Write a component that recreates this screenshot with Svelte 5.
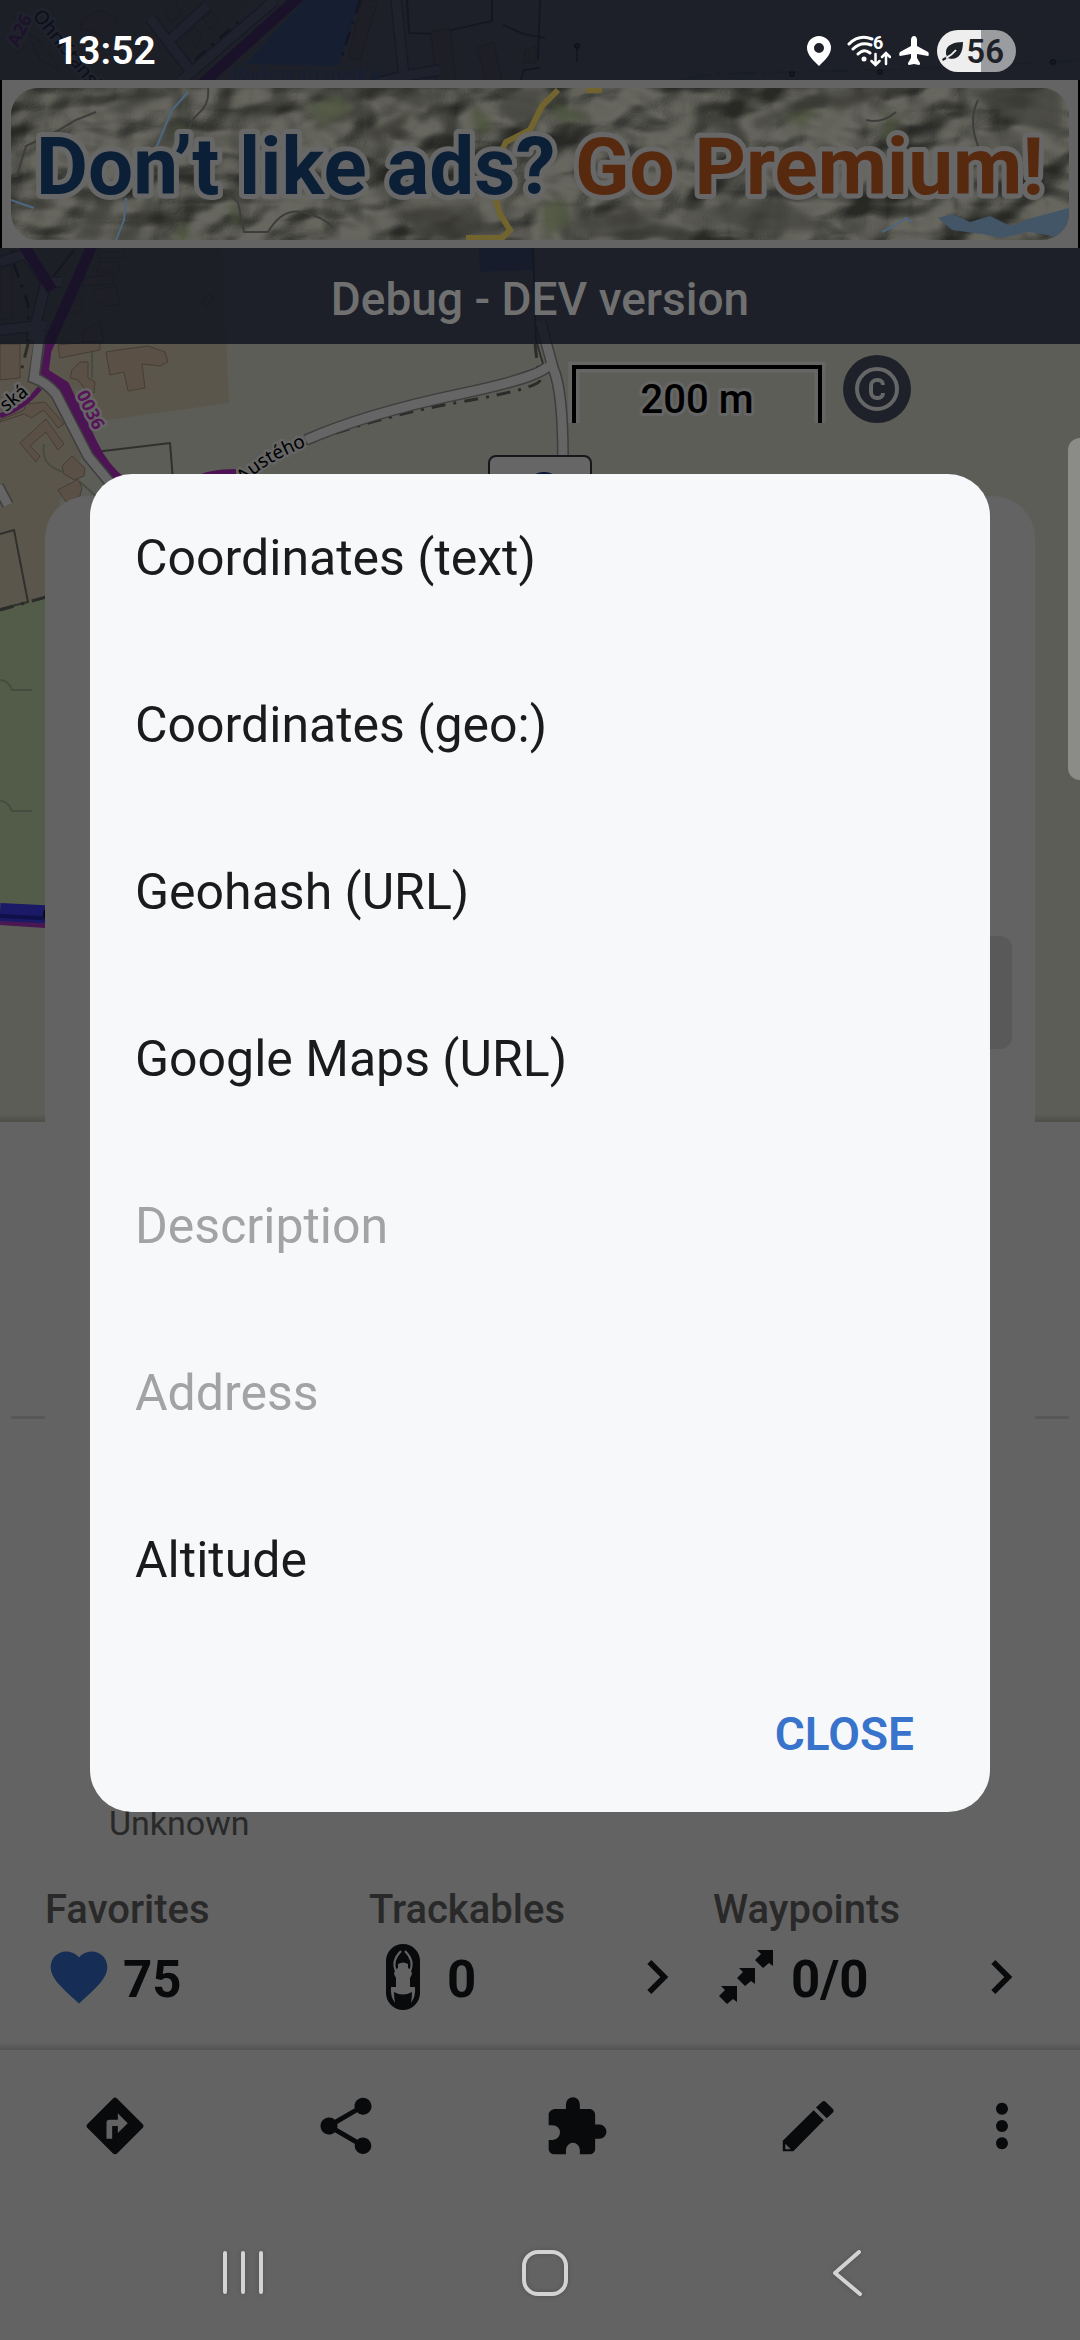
<script>
  // Copy menu shown above the point detail screen.
  const copyItems = [
    { label: 'Coordinates (text)', enabled: true },
    { label: 'Coordinates (geo:)', enabled: true },
    { label: 'Geohash (URL)', enabled: true },
    { label: 'Google Maps (URL)', enabled: true },
    { label: 'Description', enabled: false },
    { label: 'Address', enabled: false },
    { label: 'Altitude', enabled: true },
  ];

  const stats = [
    { id: 'favorites', label: 'Favorites', value: '75', link: false },
    { id: 'trackables', label: 'Trackables', value: '0', link: true },
    { id: 'waypoints', label: 'Waypoints', value: '0/0', link: true },
  ];

  const actions = [
    { label: 'Navigate', path: 'M21.710 11.290l-9-9a.996.996 0 0 0-1.410 0l-9 9a.996.996 0 0 0 0 1.410l9 9c.39.39 1.020.39 1.410 0l9-9a.996.996 0 0 0 0-1.410zM13 14.500V12h-2v4.500H9v-5.700c0-.6.4-1 1-1h3V7.500l3.500 3.500z' },
    { label: 'Share', path: 'M18 16.080c-.76 0-1.440.3-1.960.77L8.910 12.700c.05-.23.09-.46.09-.7s-.04-.47-.09-.7l7.050-4.110c.54.5 1.250.81 2.040.81 1.660 0 3-1.340 3-3s-1.340-3-3-3-3 1.340-3 3c0 .24.04.47.09.7L8.040 9.810C7.500 9.310 6.790 9 6 9c-1.660 0-3 1.340-3 3s1.340 3 3 3c.79 0 1.500-.31 2.040-.81l7.120 4.160c-.05.21-.08.43-.08.65 0 1.610 1.310 2.920 2.920 2.920s2.920-1.310 2.920-2.920-1.310-2.920-2.920-2.920z' },
    { label: 'Add-ons', path: 'M19.900 11.500H18.400V8c0-1.100-.9-2-2-2H13V4.300a2.400 2.400 0 0 0-4.900 0V6H4.500c-1.400 0-2.500.9-2.500 2v3.700h1.400a2.600 2.600 0 0 1 0 5.200H2V20c0 1.100.9 2 2.200 2h3.900v-1.600a2.450 2.450 0 0 1 4.900 0V22h3.400c1.100 0 2-.9 2-2v-3.500h1.500a2.500 2.500 0 0 0 0-5z' },
    { label: 'Edit', path: 'M3.100 17.200v3.700h3.700L17.600 10 14 6.400zM4 18.300l1.900 1.900H4zM20.700 7.300a1 1 0 0 0 0-1.400l-2.400-2.400a1 1 0 0 0-1.400 0L14.800 5.500l3.800 3.800z' },
    { label: 'More', path: 'M12 8c1.200 0 2.100-1 2.100-2.100S13.200 3.800 12 3.800s-2.100 1-2.100 2.100S10.800 8 12 8zm0 1.900c-1.200 0-2.100 1-2.100 2.100s.9 2.100 2.100 2.100 2.100-1 2.100-2.100-.9-2.100-2.100-2.100zm0 6.100c-1.200 0-2.100 1-2.100 2.100s.9 2.100 2.100 2.100 2.100-1 2.100-2.100-.9-2.100-2.100-2.100z' },
  ];
</script>

<main class="screen">
  <section class="map-area">
    <svg class="map" viewBox="0 0 1080 1122" preserveAspectRatio="xMinYMin slice" aria-hidden="true">
      <defs>
        <path id="street" d="M244 484 Q265 462 312 444" />
        <path id="lane" d="M6 412 Q20 402 38 386" />
      </defs>
      <rect width="1080" height="1122" fill="#5c5d56" />
      <path fill="#5b564b" d="M0 0H250L100 248H222L229 403 100 422 60 500 45 600 0 610z" />
      <path fill="#5c5d56" d="M72 384L100 421 229 403 260 480 130 500z" />
      <path fill="#525c48" d="M0 609L60 594V910H0z" />
      <path fill="#34587f" d="M246 64L304 0H360L338 66z" />
      <path fill="#3b4761" d="M479 248H533V270L480 272z" />

      <!-- parcels and fences -->
      <g class="parcel">
        <path d="M407 0L409 33 434 34 492 21 492 0M503 25L524 34 545 38M540 68L524 70 520 82M540 0L538 60M95 452L170 443 173 480M0 534L14 530 28 602 0 609M1 262L14 250M35 264L52 278 74 250M577 46V62M533 248L536 340 546 374" />
      </g>
      <path class="faint" d="M44 444Q40 466 64 472M92 348V378M80 482L96 496" />
      <g class="dash">
        <path d="M0 610L46 597M360 0L340 62M195 60L245 16M28 344L20 376M14 264L28 304 28 344M305 444Q380 416 460 402T540 380M535 344L538 370" />
      </g>
      <path class="faint" d="M545 104L713 74 792 72 880 70 1053 62 1080 60" stroke-dasharray="30 6 4 6" />
      <g fill="none" stroke="#15171c" stroke-width="2">
        <circle cx="577" cy="46" r="2" /><circle cx="792" cy="74" r="2" />
        <circle cx="880" cy="72" r="2" /><circle cx="1053" cy="62" r="2" />
      </g>

      <!-- buildings -->
      <g class="building">
        <path d="M82 20L98 10 119 18 104 36 92 32 80 28zM165 12L176 3 181 14 172 22zM203 18L212 12 219 22 210 30zM186 34L194 27 202 36 196 46zM14 32L22 28 38 40 56 62 60 70 40 60 32 42 16 52z" />
        <path d="M431 32L450 28 456 82H436zM477 48L494 42 502 82H486zM362 0L378 0 360 60 348 58zM525 50L536 46 536 62 524 64zM98 252H124V258H98zM100 262L120 262 118 272 96 272zM84 278L114 274 113 284 82 286zM94 290L116 286 120 305 104 306 94 298zM70 296L82 296 82 312 68 312zM202 300L210 294 213 298 206 308zM84 330L100 322 104 342 82 342zM0 264L12 266 12 318 0 320z" />
        <path d="M0 344H20V378L0 380zM58 345L100 341 100 350 60 358zM106 352L118 350 148 346 165 352 168 362 160 366 142 364 145 388 128 391 124 372 110 375zM72 370L80 362 88 362 88 378 95 382 94 393 84 388 78 380 70 378z" />
        <path d="M0 420L24 410 26 404 45 402 64 424 58 428 44 410 34 416 32 418 24 414 0 422zM20 443L46 419 64 444 58 450 46 432 30 446 40 456 36 462zM62 466L72 456 85 468 84 476 74 480 64 474zM58 490L78 479 82 488 80 496 66 502z" />
      </g>

      <!-- side roads -->
      <g class="road-edge">
        <path d="M150 18L190 70M170 40L208 5M180 82L275 0M396 0L404 76 440 70M404 76L372 84" />
        <path d="M0 262L26 254 46 282 32 340M0 330L46 325M46 282H62M306 440Q365 414 460 394T548 362M540 320L553 368Q563 390 563 460M-2 486L8 505" />
      </g>
      <g class="road">
        <path d="M150 18L190 70M170 40L208 5M180 82L275 0M396 0L404 76 440 70M404 76L372 84" />
        <path d="M0 262L26 254 46 282 32 340M0 330L46 325M46 282H62M306 440Q365 414 460 394T548 362M540 320L553 368Q563 390 563 460M-2 486L8 505" />
      </g>

      <!-- marked trails -->
      <g class="trail">
        <path d="M202 84L302 -6M24 246L52 290M92 246L46 350 43 373 64 386 92 444Q104 470 124 484" />
        <path d="M40 388Q24 408 0 416" stroke-width="5" />
        <path d="M196 480Q208 472 236 472" stroke-width="6" />
      </g>
      <path class="road-edge" d="M40 340L34 378Q46 382 56 394L88 456 116 490" />
      <path class="road" d="M40 330L34 378Q46 382 56 394L88 456 116 490" />
      <path stroke="#4b1752" stroke-width="6" d="M0 922L60 926" />
      <path stroke="#1a1a66" stroke-width="18" d="M0 912L60 915" />
      <path stroke="#10104a" stroke-width="4" d="M0 916L60 919" />
      <circle cx="49" cy="914" r="6" fill="#08080d" />
      <path class="faint" d="M0 680Q8 680 12 690H32M0 801Q8 801 12 811H32" />

      <g class="map-label">
        <text x="32" y="16" transform="rotate(51 32 16)">Ohništanská</text>
        <text><textPath href="#street">Austého</textPath></text>
        <text><textPath href="#lane">ská</textPath></text>
        <text class="water" x="230" y="82">Podsychrovský</text>
        <text class="ref" x="76" y="394" transform="rotate(64 76 394)">0036</text>
        <text class="ref" x="18" y="48" transform="rotate(-64 18 48)">A26</text>
      </g>

      <rect x="489" y="456" width="102" height="60" rx="7" fill="#666" stroke="#15171b" stroke-width="2" />
      <circle cx="544" cy="490" r="18" fill="#0c1738" />
    </svg>

    <header class="status">
      <time>13:52</time>
      <div class="status-icons">
        <svg width="24" height="30" viewBox="0 0 24 30" aria-hidden="true">
          <path fill="#fff" fill-rule="evenodd" d="M12 0A12 12 0 0 0 0 12c0 7 7 13 12 18 5-5 12-11 12-18A12 12 0 0 0 12 0zm0 7a5 5 0 1 1 0 10 5 5 0 0 1 0-10z" />
        </svg>
        <svg class="wifi" width="44" height="40" viewBox="0 -4 44 40" aria-hidden="true">
          <g fill="none" stroke="#fff" stroke-width="3" stroke-linecap="round">
            <path d="M2 9Q12-1 25 4M6 14Q14 6 24 10M11 19Q17 13 23 18" />
            <path d="M28.500 19v11m-4-4l4 4 4-4M39 29V18m-4 4l4-4 4 4" stroke-width="2.500" />
          </g>
          <circle cx="17" cy="24" r="2.500" fill="#fff" />
          <text x="26" y="14" font-size="18" font-weight="700" fill="#fff">6</text>
        </svg>
        <svg width="30" height="30" viewBox="0 0 30 30" aria-hidden="true">
          <path fill="#fff" d="M15 0c2 0 3 2 3 4v6l11 6c1 1 1 4 0 4l-11-2v4l3 5c0 1 0 2-1 2l-5-1-5 1c-1 0-1-1-1-2l3-5v-4L1 20c-1 0-1-3 0-4l11-6V4c0-2 1-4 3-4z" />
        </svg>
        <div class="battery">
          <svg width="21" height="19" viewBox="0 0 21 19" aria-hidden="true">
            <path fill="#1e2128" d="M21 0C12 0 4 3 4 10c0 2 0 3 1 4L0 17l1 2 5-3c8 3 15-2 15-16z" />
            <path d="M4 16Q10 13 14 8" fill="none" stroke="#eee" stroke-width="2" />
          </svg>
          <span>56</span>
        </div>
      </div>
    </header>

    <a class="banner" href="#premium" aria-label="Don’t like ads? Go Premium!">
      <svg viewBox="0 0 1076 168">
        <defs>
          <clipPath id="card-clip"><rect x="9" y="8" width="1058" height="152" rx="27" /></clipPath>
          <filter id="soft" x="-10%" y="-10%" width="120%" height="120%"><feGaussianBlur stdDeviation="3" /></filter>
          <filter id="relief" x="0" y="0" width="100%" height="100%" color-interpolation-filters="sRGB">
            <feTurbulence type="fractalNoise" baseFrequency="0.011 0.016" numOctaves="3" seed="12" result="noise" />
            <feDiffuseLighting in="noise" surfaceScale="42" lighting-color="#74746b">
              <feDistantLight azimuth="225" elevation="52" />
            </feDiffuseLighting>
          </filter>
        </defs>
        <g clip-path="url(#card-clip)">
          <rect width="1076" height="168" fill="#5a5a53" />
          <rect width="1076" height="168" filter="url(#relief)" opacity="0.55" />
          <g filter="url(#soft)" opacity="0.7">
            <path fill="#42433e" d="M120 34L180 8H150L100 30zM170 40L150 60 130 76 160 72 190 40zM280 8L236 50 290 20zM310 56L360 8H296L330 20zM385 8L440 12 420 30 400 22zM70 160L110 100 120 104 96 160zM116 160L150 110 154 128 132 160zM400 140L440 124 470 132 500 152 420 156zM500 8L540 8 530 60 500 30zM750 40L820 12 840 14 800 32 754 50zM960 8H1060V60L990 28zM560 150L600 130 640 140 700 150 640 158zM700 130L780 120 830 150 740 150z" />
            <path fill="#34362f" d="M312 42Q340 36 362 24L352 38 316 48zM370 50L410 30 398 54 372 58zM390 134L430 126 480 142 450 150zM600 134L630 128 650 142 610 148zM820 24L860 8 900 8 840 30z" />
            <path fill="#4d563e" d="M304 26L340 16 350 30 320 44zM470 24L490 40 484 56 470 44zM176 40L184 52 176 60 170 50zM548 20L586 36 556 44zM226 124L238 130 232 150zM178 140L188 150 184 160H172zM884 28L896 40 888 66 880 60zM780 36L820 28 800 46zM540 126L560 118 570 140 544 158z" />
          </g>
          <path fill="none" stroke="#3d3d3b" stroke-width="2" d="M206 8Q208 24 196 34T186 64M9 96H15L24 66 50 54 74 40 94 32M218 108L236 122 242 152H266Q280 128 300 132T332 148M864 40Q880 44 894 32M976 20Q966 40 976 66 980 74 970 84" />
          <path fill="none" stroke="#4d6780" stroke-width="2" d="M9 120L20 124 32 128M186 12L170 30 160 54 150 78M124 118L122 140 114 160M880 152L892 146 904 138 910 142" />
          <path fill="none" stroke="#71642f" stroke-width="6" d="M584 10H600M556 10L540 26 528 50 504 62 498 74M494 120L498 134 508 150 500 158H464" />
          <path fill="#435667" d="M936 138L950 134 968 142 988 136 1008 146 1030 138 1067 128V160L1040 154 1026 152 1000 158 980 154 950 150z" />
        </g>
        <g class="ad-text">
          <text x="34" y="114" fill="#0b1f36">Don’t like ads?</text>
          <text x="1042" y="114" text-anchor="end" fill="#572a10">Go Premium!</text>
        </g>
      </svg>
    </a>

    <h1 class="title">Debug - DEV version</h1>

    <div class="map-tools">
      <svg width="258" height="64" viewBox="0 0 258 64" role="img" aria-label="Scale 200 m">
        <path class="scale-halo" d="M6 62V6H252V62" />
        <path class="scale-line" d="M6 62V6H252V62" />
        <text x="129" y="52">200 m</text>
      </svg>
      <button class="copyright" aria-label="Map copyright">
        <svg width="44" height="44" viewBox="0 0 44 44" aria-hidden="true">
          <circle cx="22" cy="22" r="20" fill="none" stroke="#666" stroke-width="4" />
          <path d="M28 18a5 5 0 0 0-5-5h-1a6 6 0 0 0-6 6v6a6 6 0 0 0 6 6h1a5 5 0 0 0 5-5" fill="none" stroke="#666" stroke-width="4" />
        </svg>
      </button>
    </div>
  </section>

  <section class="detail">
    <hr />
    <p class="state">Unknown</p>
    <div class="stats">
      {#each stats as stat (stat.id)}
        <div class="stat">
          <h2>{stat.label}</h2>
          <div class="stat-row {stat.id}">
            {#if stat.id === 'favorites'}
              <svg width="68" height="68" viewBox="0 0 24 24" aria-hidden="true">
                <path fill="#162e55" d="M12 21.350l-1.450-1.320C5.400 15.360 2 12.280 2 8.500 2 5.420 4.420 3 7.500 3c1.740 0 3.410.81 4.500 2.090C13.090 3.810 14.760 3 16.500 3 19.580 3 22 5.420 22 8.500c0 3.780-3.400 6.860-8.550 11.540z" />
              </svg>
            {:else if stat.id === 'trackables'}
              <svg width="68" height="68" viewBox="0 0 68 68" aria-hidden="true">
                <rect x="17" y="1" width="34" height="66" rx="17" fill="#090a0c" />
                <path fill="none" stroke="#636363" stroke-width="2" d="M32 8Q22 18 27 28M36 8Q46 18 41 28" />
                <path fill="#636363" d="M29 21Q34 18 39 21L39 25 42 27 43 31 41 35V44H46Q47 53 42 60 43 54 43 49 34 54 25 49 25 54 26 60 21 53 22 44H27V35L25 31 26 27 29 25z" />
              </svg>
            {:else}
              <svg width="68" height="68" viewBox="0 0 68 68" aria-hidden="true">
                <g fill="#090a0c">
                  <path d="M44 7H60V23L56 20 50 25 42 17 48 11z" />
                  <path d="M26 25H42V41L38 38 32 43 24 35 30 29z" />
                  <path d="M8 43H24V59L20 56 14 61 6 53 12 47z" />
                </g>
              </svg>
            {/if}
            <strong>{stat.value}</strong>
            {#if stat.link}
              <button class="more" aria-label="Show {stat.label}">
                <svg width="68" height="68" viewBox="0 0 24 24" aria-hidden="true">
                  <path fill="#090a0c" d="M10 6L8.590 7.410 13.170 12l-4.580 4.590L10 18l6-6z" />
                </svg>
              </button>
            {/if}
          </div>
        </div>
      {/each}
    </div>
  </section>

  <nav class="actions">
    {#each actions as action (action.label)}
      <button aria-label={action.label}>
        <svg width="68" height="68" viewBox="0 0 24 24" aria-hidden="true"><path d={action.path} /></svg>
      </button>
    {/each}
  </nav>

  <nav class="system">
    <button aria-label="Recents">
      <svg width="48" height="48" viewBox="0 0 48 48" aria-hidden="true"><path d="M6 4V43M24 4V43M42 4V43" /></svg>
    </button>
    <button aria-label="Home">
      <svg width="48" height="48" viewBox="0 0 48 48" aria-hidden="true"><rect x="3" y="3" width="42" height="42" rx="14" /></svg>
    </button>
    <button aria-label="Back">
      <svg width="48" height="48" viewBox="0 0 48 48" aria-hidden="true"><path d="M36 3L12 24 37 45" /></svg>
    </button>
  </nav>

  <div class="edge-handle"></div>

  <div class="layer">
    <div class="sheet"><span class="sheet-button"></span></div>
  </div>

  <div class="layer">
    <div class="dialog" role="dialog" aria-label="Copy">
      {#each copyItems as item (item.label)}
        <button class="item" disabled={!item.enabled}>{item.label}</button>
      {/each}
      <div class="dialog-actions">
        <button class="close">CLOSE</button>
      </div>
    </div>
  </div>
</main>

<style>
  :global(body) { background: #636363; }

  .screen {
    position: relative;
    display: flex;
    flex-direction: column;
    min-height: 100vh;
    overflow: hidden;
    background: #636363;
    font-family: Roboto, 'Liberation Sans', sans-serif;
  }
  button {
    border: 0;
    padding: 0;
    background: none;
    font: inherit;
    color: inherit;
  }
  svg { display: block; flex: none; }

  .map-area {
    position: relative;
    height: 1122px;
  }
  .map {
    position: absolute;
    inset: 0;
    width: 100%;
    height: 100%;
  }
  .map-area::after {
    content: '';
    position: absolute;
    inset: auto 0 0;
    height: 8px;
    background: linear-gradient(transparent, rgb(0 0 0 / 0.16));
  }
  .parcel { fill: none; stroke: #2f302d; stroke-width: 2; }
  .dash { fill: none; stroke: #2b2c2a; stroke-width: 3; stroke-dasharray: 14 8 3 8; }
  .faint { fill: none; stroke: #474b40; stroke-width: 2; }
  .building { fill: #5b5045; stroke: #463d35; stroke-width: 1; }
  .road-edge { fill: none; stroke: #3e3e3e; stroke-width: 12; }
  .road { fill: none; stroke: #656565; stroke-width: 9; }
  .trail { fill: none; stroke: #4c1453; stroke-width: 11; }
  .map-label {
    font: 19px 'Noto Sans', sans-serif;
    stroke: #656565;
    stroke-width: 5;
    stroke-linejoin: round;
    paint-order: stroke;
  }
  .map-label .water { font: italic 20px 'DejaVu Serif', serif; fill: #30548a; stroke: none; }
  .map-label .ref { font-size: 18px; font-weight: 700; fill: #571459; }

  .status, .title {
    position: relative;
    background: rgb(14 18 30 / 0.8);
  }
  .status {
    display: flex;
    justify-content: space-between;
    align-items: center;
    height: 80px;
    padding: 22px 64px 0 56px;
    box-sizing: border-box;
    color: #fff;
  }
  time {
    font-size: 39px;
    line-height: 56px;
    font-weight: 600;
  }
  .status-icons {
    display: flex;
    align-items: center;
    gap: 8px;
  }
  .wifi { margin-left: 8px; }
  .battery {
    display: flex;
    align-items: center;
    gap: 3px;
    height: 42px;
    padding: 0 12px 0 5px;
    border-radius: 21px;
    background: linear-gradient(90deg, #eee 56%, #9b9c9f 56%);
    color: #1e2128;
    font-size: 33px;
    font-weight: 600;
  }

  .banner {
    position: relative;
    display: block;
    padding: 0 2px;
    background: linear-gradient(90deg, #000 2px, #646464 2px calc(100% - 2px), #000 calc(100% - 2px));
  }
  .ad-text {
    font-size: 80px;
    font-weight: 700;
    stroke: #676767;
    stroke-width: 10;
    stroke-linejoin: round;
    paint-order: stroke;
  }
  .title {
    margin: 0;
    height: 96px;
    font-size: 46px;
    line-height: 102px;
    font-weight: 500;
    text-align: center;
    color: #707070;
  }

  .map-tools {
    position: relative;
    display: flex;
    justify-content: flex-end;
    align-items: flex-start;
    gap: 17px;
    padding: 11px 169px 0 0;
  }
  .map-tools > svg { margin-top: 6px; }
  .map-tools path { fill: none; }
  .scale-halo { stroke: #666; stroke-width: 11; }
  .scale-line { stroke: #000; stroke-width: 4; }
  .map-tools text {
    font-size: 40px;
    font-weight: 500;
    text-anchor: middle;
    stroke: #666;
    stroke-width: 6;
    stroke-linejoin: round;
    paint-order: stroke;
  }
  .copyright {
    display: grid;
    place-items: center;
    width: 68px;
    height: 68px;
    border-radius: 50%;
    background: #1e212a;
  }

  .detail {
    flex: 1;
    display: flex;
    flex-direction: column;
    background: linear-gradient(transparent calc(100% - 8px), #545454) no-repeat;
  }
  hr {
    width: calc(100% - 22px);
    height: 3px;
    margin: 294px auto 0;
    border: 0;
    background: #575757;
  }
  .state {
    margin: auto 0 0;
    padding-left: 109px;
    font-size: 34px;
    line-height: 48px;
    color: #292929;
  }
  .stats {
    display: grid;
    grid-template-columns: 302fr 322fr 322fr;
    gap: 22px;
    padding: 34px 45px 35px;
  }
  h2 {
    margin: 0;
    font-size: 40px;
    line-height: 58px;
    font-weight: 500;
    color: #292929;
  }
  .stat-row {
    display: flex;
    align-items: center;
    gap: 10px;
    height: 76px;
    color: #090a0c;
    font-size: 51px;
  }
  strong { padding-top: 5px; }
  .more { margin-left: auto; }

  .actions {
    display: grid;
    grid-template-columns: repeat(4, 1fr) 157px;
    height: 152px;
    fill: #090a0c;
  }
  .actions button, .system button {
    display: grid;
    place-items: center;
  }
  .system {
    display: grid;
    grid-template-columns: repeat(3, 1fr);
    height: 138px;
    padding: 4px 82px 0 92px;
    box-sizing: border-box;
  }
  .system svg {
    fill: none;
    stroke: #d3d3d3;
    stroke-width: 4;
    stroke-linecap: round;
    stroke-linejoin: round;
    filter: drop-shadow(0 0 2px #505050);
  }

  .edge-handle {
    position: absolute;
    top: 438px;
    right: 0;
    width: 12px;
    height: 342px;
    border-radius: 12px 0 0 12px;
    background: #8b8c88;
  }

  .layer {
    position: absolute;
    inset: 80px 0 134px;
    display: flex;
    justify-content: center;
    align-items: center;
  }
  .sheet {
    display: flex;
    justify-content: flex-end;
    width: calc(100% - 90px);
    height: 1294px;
    padding: 440px 23px 0 0;
    box-sizing: border-box;
    border-radius: 42px;
    background: #636363;
  }
  .sheet-button {
    width: 160px;
    height: 113px;
    border-radius: 12px;
    background: #595959;
  }
  .dialog {
    display: flex;
    flex-direction: column;
    width: calc(100% - 180px);
    border-radius: 42px;
    background: #f7f8fa;
    overflow: hidden;
  }
  .item {
    height: 167px;
    padding: 0 45px;
    text-align: left;
    font-size: 50px;
    color: #1a1b1d;
  }
  .item:disabled { color: #a2a3a5; }
  .dialog-actions {
    display: flex;
    justify-content: flex-end;
    height: 169px;
    padding: 23px 76px 10px 0;
    box-sizing: border-box;
  }
  .close {
    font-size: 46px;
    font-weight: 600;
    color: #3873cc;
  }
</style>
